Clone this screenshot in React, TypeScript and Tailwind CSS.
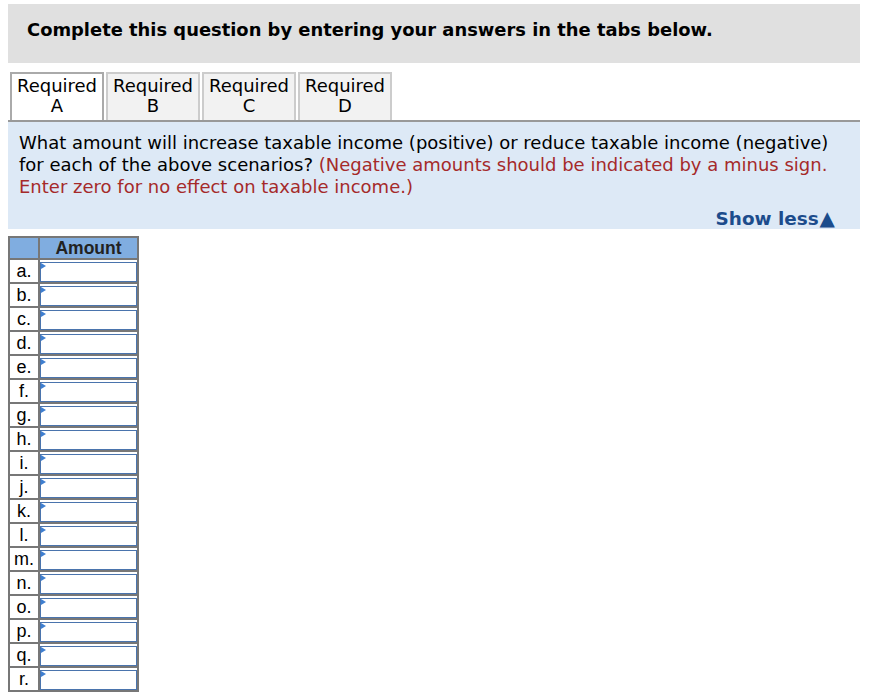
const ROWS = ["a.", "b.", "c.", "d.", "e.", "f.", "g.", "h.", "i.", "j.", "k.", "l.", "m.", "n.", "o.", "p.", "q.", "r."];
const TABS = ["A", "B", "C", "D"];

function AnswerCell() {
  return (
    <div className="relative h-full bg-white pt-[2px]">
      <div className="h-full border border-[#4a74ad] bg-white" />
      <span className="absolute left-[1px] top-[3px] h-0 w-0 border-y-[3px] border-l-[5px] border-y-transparent border-l-[#3f7fd0]" />
    </div>
  );
}

export default function App() {
  return (
    <div className="w-[870px] bg-white pl-2 pr-[10px] pt-1 font-['DejaVu_Sans',Verdana,sans-serif] text-black">
      <div className="h-[59px] bg-[#e0e0e0] pl-[19px] pt-[15px] text-[17.9px] font-bold leading-[22px]">
        Complete this question by entering your answers in the tabs below.
      </div>

      <div className="mt-[9px] flex gap-[2px] border-b-2 border-[#999] pl-[2px]">
        {TABS.map((t, i) => (
          <div
            key={t}
            className={
              "h-[48px] w-[94px] border-2 border-b-0 pt-[2px] text-center text-[18px] leading-[20px] " +
              (i === 0 ? "border-[#aaa] bg-white" : "border-[#ccc] bg-[#f2f2f2]")
            }
          >
            Required
            <br />
            {t}
          </div>
        ))}
      </div>

      <div className="h-[107px] bg-[#dde9f6] pl-[11px] pr-[25px] pt-[10px] text-[18px] leading-[22px]">
        <p>
          What amount will increase taxable income (positive) or reduce taxable income (negative) for each of the above
          scenarios?{" "}
          <span className="text-[#a52a2a]">
            (Negative amounts should be indicated by a minus sign. Enter zero for no effect on taxable income.)
          </span>
        </p>
        <div className="mt-[10px] flex items-baseline justify-end text-[18.4px] font-bold text-[#1c4c8c]">
          <span>Show less</span>
          <span className="ml-[1px] text-[20px] leading-[20px]">▲</span>
        </div>
      </div>

      <div className="mt-[7px] grid w-[131px] grid-cols-[28px_97px] gap-[2px] bg-[#777] p-[2px] font-['Liberation_Sans',Arial,sans-serif]">
        <div className="h-[20px] bg-[#80ade0]" />
        <div className="h-[20px] bg-[#80ade0] text-center text-[17.5px] font-bold leading-[20px] text-[#222]">
          Amount
        </div>
        {ROWS.map((r) => (
          <>
            <div key={r + "l"} className="h-[22px] bg-white text-center text-[18px] leading-[22px]">
              {r}
            </div>
            <div key={r + "v"} className="h-[22px]">
              <AnswerCell />
            </div>
          </>
        ))}
      </div>
    </div>
  );
}
